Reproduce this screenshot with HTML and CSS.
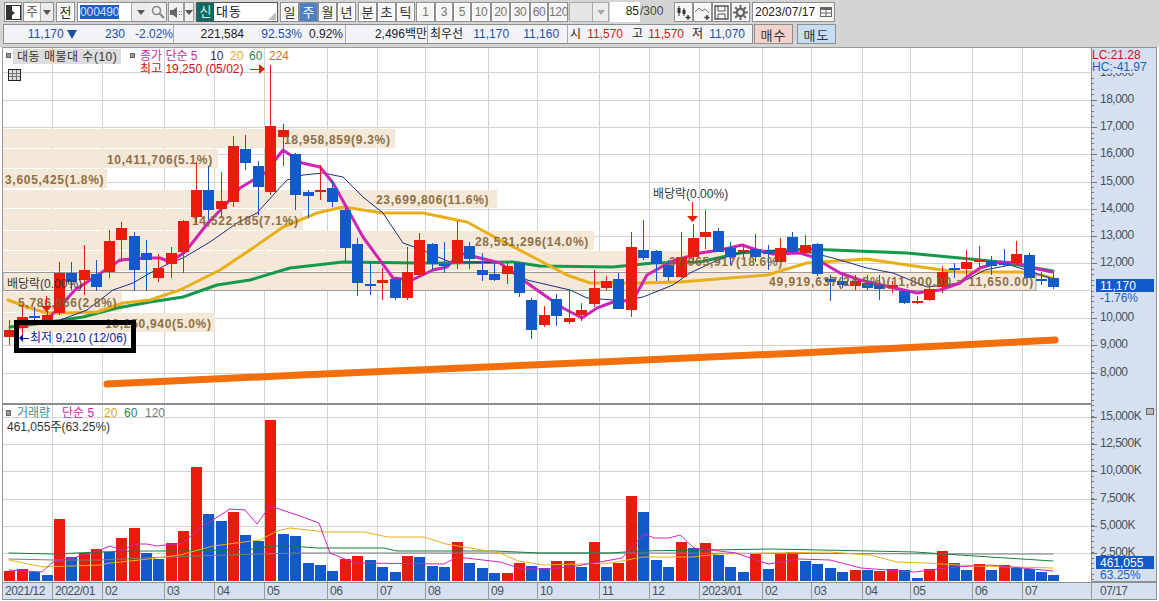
FILE: index.html
```html
<!doctype html>
<html>
<head>
    <meta charset='utf-8'>
    <title>대동 주봉 차트</title>
    <link rel="stylesheet" href="styles.css">
</head>
<body>
    <div class="toolbar">
        <button class="btn iconBtn w18">
            <svg width="15" height="15" viewBox="0 0 15 15"><rect x="0.5" y="0.5" width="14" height="14" fill="#fff" stroke="#333"/><rect x="1" y="1" width="5" height="13" fill="#333"/><path d="M5 5l4 3-4 3z" fill="#333"/></svg>
        </button>
        <div class="combo w30"><span class="comboText">주</span><span class="arrowBtn"><i class="tri"></i></span></div>
        <button class="btn w19 gapL">전</button>
        <div class="codeBox">
            <span class="codeField"><span class="selected">000490</span></span>
            <span class="arrowBtn w19"><i class="tri"></i></span>
            <span class="plainBtn w16">
                <svg width="14" height="14" viewBox="0 0 14 14"><circle cx="5.5" cy="5.5" r="4" fill="none" stroke="#888" stroke-width="1.6"/><path d="M8.5 8.5l4.5 4.5" stroke="#888" stroke-width="2.2"/></svg>
            </span>
        </div>
        <span class="plainBtn w16 soundBtn">
            <svg width="13" height="13" viewBox="0 0 13 13"><path d="M0 4h3l4-3v11l-4-3H0z" fill="#666"/><path d="M9 5h1v1H9zM11 5h1v1h-1zM9 8h1v1H9zM11 8h1v1h-1z" fill="#888"/></svg>
        </span>
        <span class="arrowBtn w9"><i class="tri"></i></span>
        <div class="nameBox"><span class="newBadge">신</span><span class="nameText">대동</span><i class="grip"></i></div>
        <div class="group gapL2">
            <button class="btn w19">일</button><button class="btn w19 active">주</button><button class="btn w19">월</button><button class="btn w19">년</button>
        </div>
        <div class="group gapL2">
            <button class="btn w19">분</button><button class="btn w19">초</button><button class="btn w19">틱</button>
        </div>
        <div class="group gapL3 nums">
            <button class="btn w19">1</button><button class="btn w18">3</button><button class="btn w18">5</button><button class="btn w20">10</button><button class="btn w19">20</button><button class="btn w20">30</button><button class="btn w18">60</button><button class="btn w20">120</button>
        </div>
        <div class="emptyCombo"><span class="arrowBtn"><i class="tri light"></i></span></div>
        <span class="countField">85</span><span class="countMax">/300</span>
        <button class="btn w19 gapL9 iconBtn">
            <svg width="15" height="15" viewBox="0 0 15 15"><path d="M3 1v10M8 3v8" stroke="#333"/><rect x="1.5" y="3" width="3" height="5" fill="#333"/><rect x="6.5" y="5" width="3" height="4" fill="#333"/><path d="M12 10v5M9.5 12.5h5" stroke="#333" stroke-width="1.4"/></svg>
        </button>
        <button class="btn w19 iconBtn">
            <svg width="15" height="15" viewBox="0 0 15 15"><path d="M0 7l4-4 3 3 3-2 4 4" fill="none" stroke="#777"/><path d="M12 10v5M9.5 12.5h5" stroke="#333" stroke-width="1.4"/></svg>
        </button>
        <button class="btn w19 iconBtn">
            <svg width="15" height="15" viewBox="0 0 15 15"><path d="M1 1h13v13H1z" fill="none" stroke="#555" stroke-width="1.4"/><path d="M4 1v5h7V1M4 14V9h7v5" fill="none" stroke="#555"/></svg>
        </button>
        <button class="btn w19 iconBtn">
            <svg width="15" height="15" viewBox="0 0 15 15"><circle cx="7.5" cy="7.5" r="3.6" fill="none" stroke="#666" stroke-width="2.4"/><path d="M7.5 0v3M7.5 12v3M0 7.5h3M12 7.5h3M2.2 2.2l2 2M10.8 10.8l2 2M12.8 2.2l-2 2M4.2 10.8l-2 2" stroke="#666" stroke-width="2"/></svg>
        </button>
        <div class="dateBox">
            <span class="dateText">2023/07/17</span>
            <span class="calBtn">
                <svg width="12" height="10" viewBox="0 0 12 10"><rect width="12" height="10" fill="#666"/><rect x="1" y="3" width="4.5" height="2.5" fill="#fff"/><rect x="6.5" y="3" width="4.5" height="2.5" fill="#fff"/><rect x="1" y="6.5" width="4.5" height="2.5" fill="#fff"/><rect x="6.5" y="6.5" width="4.5" height="2.5" fill="#fff"/></svg>
            </span>
        </div>
    </div>

    <div class="quotebar">
        <div class="quoteBox">
            <div class="cell cellPrice">
                <span class="down w49 right">11,170 <i class="downTri"></i></span>
                <span class="down w48 right">230</span>
                <span class="down w48 right">-2.02%</span>
            </div>
            <div class="cell cellVol">
                <span class="dark w70 right">221,584</span>
                <span class="down w58 right">92.53%</span>
                <span class="dark w41 right">0.92%</span>
            </div>
            <div class="cell cellAmt"><span class="dark w81 right">2,496백만</span></div>
            <div class="cell cellBest">
                <span class="dark">최우선</span>
                <span class="down w46 right">11,170</span>
                <span class="down w50 right">11,160</span>
            </div>
            <div class="cell cellOhl">
                <span class="dark">시</span><span class="up w42 right">11,570</span>
                <span class="dark w20 right">고</span><span class="up w41 right">11,570</span>
                <span class="dark w19 right">저</span><span class="down w42 right">11,070</span>
            </div>
        </div>
        <button class="orderBtn buy">매수</button>
        <button class="orderBtn sell">매도</button>
    </div>

    <svg id="chart" class="chart" width="1159" height="554" viewBox="0 47 1159 554"></svg>
    <script src="chart.js"></script>
</body>
</html>
```

FILE: styles.css
```css
html, body {
    margin: 0;
    padding: 0;
    overflow: hidden;
}

body {
    width: 1159px;
    height: 601px;
    background: #d4d4d4;
    font-family: "Liberation Sans", "Noto Sans CJK KR", sans-serif;
    font-size: 12px;
    color: #222;
}

.toolbar {
    display: flex;
    align-items: stretch;
    height: 20px;
    padding: 2px 0 0 4px;
}

.btn {
    box-sizing: border-box;
    height: 20px;
    padding: 0;
    margin: 0;
    border: 1px solid #8e8e8e;
    background: #f5f5f5;
    font: inherit;
    font-size: 13px;
    line-height: 17px;
    color: #333;
    box-shadow: inset 0 0 0 1px #fff;
    flex: none;
}

.iconBtn {
    display: flex;
    align-items: center;
    justify-content: center;
}

.btn.active {
    background: #4f80c4;
    color: #fff;
    box-shadow: none;
}

.w9 { width: 9px; }
.w16 { width: 16px; }
.w18 { width: 18px; }
.w19 { width: 19px; }
.w20 { width: 20px; }
.w30 { width: 31px; }

.gapL { margin-left: 2px; }
.gapL2 { margin-left: 2px; }
.gapL3 { margin-left: 1px; }
.gapL9 { margin-left: 9px; }

.group {
    display: flex;
    flex: none;
}

.nums .btn {
    color: #777;
    font-size: 12px;
    letter-spacing: -0.3px;
}

.combo {
    display: flex;
    box-sizing: border-box;
    height: 20px;
    margin-left: 1px;
    border: 1px solid #8e8e8e;
    background: #fff;
    flex: none;
}

.comboText {
    flex: 1;
    text-align: center;
    font-size: 13px;
    line-height: 18px;
    color: #555;
}

.arrowBtn {
    display: flex;
    align-items: center;
    justify-content: center;
    width: 13px;
    background: #ececec;
    border-left: 1px solid #aaa;
    box-sizing: border-box;
    flex: none;
}

.arrowBtn.w19 { width: 19px; }
.arrowBtn.w9 { width: 10px; border: 1px solid #999; background: #f2f2f2; }

.tri {
    width: 0;
    height: 0;
    border-left: 4px solid transparent;
    border-right: 4px solid transparent;
    border-top: 5px solid #555;
}

.tri.light { border-top-color: #aaa; }

.codeBox {
    display: flex;
    box-sizing: border-box;
    width: 90px;
    height: 20px;
    margin-left: 2px;
    border: 1px solid #8e8e8e;
    background: #f0f0f0;
    flex: none;
}

.codeField {
    flex: 1;
    background: #fff;
    padding-left: 2px;
    line-height: 18px;
}

.selected {
    display: inline-block;
    height: 14px;
    line-height: 14px;
    background: #1f5fc4;
    color: #cfe0ff;
    letter-spacing: -0.1px;
}

.plainBtn {
    display: flex;
    align-items: center;
    justify-content: center;
    flex: none;
}

.soundBtn {
    box-sizing: border-box;
    height: 20px;
    border: 1px solid #999;
    background: #f2f2f2;
    margin-left: 1px;
}

.nameBox {
    position: relative;
    display: flex;
    box-sizing: border-box;
    width: 82px;
    height: 20px;
    margin-left: 2px;
    border: 1px solid #555;
    background: #fff;
    flex: none;
}

.newBadge {
    width: 17px;
    background: #0c6a60;
    color: #d8f0ea;
    font-size: 13px;
    line-height: 17px;
    text-align: center;
}

.nameText {
    padding-left: 2px;
    font-size: 13px;
    line-height: 18px;
    letter-spacing: 1px;
    color: #111;
}

.grip {
    position: absolute;
    right: 1px;
    bottom: 1px;
    width: 0;
    height: 0;
    border-left: 8px solid transparent;
    border-bottom: 8px solid #bbb;
}

.emptyCombo {
    display: flex;
    justify-content: flex-end;
    box-sizing: border-box;
    width: 40px;
    height: 20px;
    margin-left: 1px;
    border: 1px solid #aaa;
    background: #e6e6e6;
    flex: none;
}

.emptyCombo .arrowBtn { width: 16px; }

.countField {
    box-sizing: border-box;
    width: 30px;
    height: 20px;
    margin-left: 1px;
    background: #fff;
    text-align: right;
    line-height: 19px;
    padding-right: 1px;
    flex: none;
}

.countMax {
    width: 25px;
    line-height: 19px;
    color: #444;
    flex: none;
}

.dateBox {
    display: flex;
    box-sizing: border-box;
    width: 83px;
    height: 20px;
    margin-left: 2px;
    border: 1px solid #8e8e8e;
    background: #fff;
    flex: none;
}

.dateText {
    width: 64px;
    line-height: 18px;
    padding-left: 2px;
    box-sizing: border-box;
    white-space: nowrap;
}

.calBtn {
    flex: 1;
    display: flex;
    align-items: center;
    justify-content: center;
    background: #f6f4ee;
}

.quotebar {
    display: flex;
    height: 20px;
    padding: 2px 0 0 3px;
}

.quoteBox {
    display: flex;
    box-sizing: border-box;
    width: 750px;
    height: 20px;
    border: 1px solid #8e8e8e;
    background: #f1f3f7;
    flex: none;
}

.cell {
    display: flex;
    box-sizing: border-box;
    line-height: 18px;
    white-space: nowrap;
    border-right: 1px solid #aaa;
}

.cellPrice { width: 170px; }
.cellVol { width: 172px; }
.cellAmt { width: 82px; }
.cellBest { width: 140px; padding-left: 2px; }
.cellOhl { border: 0; padding-left: 2px; }

.right { text-align: right; }
.w41 { width: 41px; }
.w42 { width: 42px; }
.w46 { width: 46px; }
.w48 { width: 48px; }
.w49 { width: 73px; }
.w50 { width: 50px; }
.w58 { width: 58px; }
.w70 { width: 70px; }
.w81 { width: 81px; }

.down { color: #1d4fa8; }
.up { color: #c8261c; }
.dark { color: #222; }

.downTri {
    display: inline-block;
    width: 0;
    height: 0;
    border-left: 5px solid transparent;
    border-right: 5px solid transparent;
    border-top: 9px solid #1d4fa8;
    vertical-align: -1px;
}

.orderBtn {
    box-sizing: border-box;
    width: 39px;
    height: 20px;
    padding: 0;
    border: 1px solid #8e8e8e;
    font: inherit;
    font-size: 13px;
    letter-spacing: 1px;
    color: #333;
    flex: none;
}

.buy { margin-left: 1px; background: #f2d2cb; }
.sell { margin-left: 4px; background: #c8def4; }

.chart {
    display: block;
    margin-top: 3px;
}

.chart text {
    font-family: "Liberation Sans", "Noto Sans CJK KR", sans-serif;
    font-size: 12px;
}

.bgPanel { fill: #fff; }
.edge { stroke: #999; stroke-width: 1; fill: none; }
.edgeDark { stroke: #8a8a8a; stroke-width: 2; fill: none; }
.axis { fill: #d6e0ee; stroke: #8f8f8f; }
.axisCap { fill: #d6e0ee; }
.grid { stroke: #d2d2d2; stroke-width: 1; }
.tick { stroke: #777; stroke-width: 1; }
.band { fill: #f6e8d9; }
.bandMax { fill: #f6e8d9; stroke: #999; }
.bandText { fill: #7d6030; font-weight: bold; letter-spacing: 0.7px; opacity: 0.88; }
.bandWide { letter-spacing: 0.9px; }
.closeLine { stroke: #999; stroke-width: 1; }

.line { fill: none; stroke-linejoin: round; stroke-linecap: round; }
.ma5 { stroke: #cf25b4; stroke-width: 3; }
.ma10 { stroke: #1c2f80; stroke-width: 1; }
.ma20 { stroke: #e9af1b; stroke-width: 3; }
.ma60 { stroke: #14994c; stroke-width: 3; }
.vma5 { stroke: #cf25b4; stroke-width: 1; }
.vma20 { stroke: #e9af1b; stroke-width: 1; }
.vma60 { stroke: #14803f; stroke-width: 1; }
.vma120 { stroke: #7d7d7d; stroke-width: 1; }
.trend { fill: none; stroke: #f26f0c; stroke-width: 7; stroke-linecap: round; stroke-linejoin: round; }

.red { fill: #e81b0c; }
.blue { fill: #1259c9; }
.wickRed { stroke: #e81b0c; stroke-width: 1; }
.wickBlue { stroke: #1259c9; stroke-width: 1; }
.arrowRed { fill: #e81b0c; }
.arrowHead { fill: #12129c; }
.markLine { stroke: #e81b0c; stroke-width: 1; }
.arrowNavy { stroke: #12129c; stroke-width: 1; }

.callout { fill: none; stroke: #000; stroke-width: 5; }

.legendBox { fill: #ddd; }
.legendDot { fill: #999; stroke: #666; }
.tableIcon { fill: #ddd; stroke: #222; }
.cornerIcon { fill: #bbb; stroke: #666; }

.tText { fill: #333; }
.tWide { letter-spacing: 0.5px; }
.tAxis { fill: #46505e; letter-spacing: -0.5px; }
.tMagenta { fill: #c229a8; }
.tNavy { fill: #1c2f80; }
.tGold { fill: #e2a51d; }
.tGreen { fill: #1f8a49; }
.tOrange { fill: #e2701d; }
.tRed { fill: #c9151c; }
.tBlue { fill: #1d5fbf; }
.tTeal { fill: #3a8f96; }
.tGray { fill: #777; }
.tHigh { fill: #c41423; }
.tLow { fill: #12129c; }
.tWhite { fill: #fff; }
```

FILE: chart.js
```js
// weekly candles as pixel rows: high, body top, body bottom, low, colour
var candles = [
    [320,330,337,345,"r"],[305,317,328,335,"r"],[307,316,318,322,"b"],[311,315,322,325,"r"],
    [262,273,313,315,"r"],[262,273,282,290,"b"],[245,270,280,295,"r"],[260,274,287,291,"b"],
    [230,241,272,278,"r"],[222,228,240,262,"r"],[232,236,270,291,"b"],[240,253,260,291,"b"],
    [254,268,278,282,"r"],[247,253,264,278,"r"],[220,221,252,273,"r"],[162,190,217,223,"r"],
    [166,190,210,220,"b"],[172,201,209,218,"r"],[136,146,202,207,"r"],[135,149,163,170,"b"],
    [161,166,187,215,"b"],[65,126,192,195,"r"],[124,130,137,166,"r"],[153,154,195,210,"b"],
    [190,192,196,218,"b"],[165,190,191,200,"r"],[180,188,202,207,"b"],[208,210,248,262,"b"],
    [238,244,283,296,"b"],[262,284,285,295,"b"],[268,280,283,300,"r"],[278,279,298,300,"b"],
    [247,272,298,300,"r"],[233,240,275,277,"r"],[243,244,264,270,"b"],[242,264,266,273,"b"],
    [221,240,263,269,"r"],[242,246,259,269,"b"],[253,270,275,281,"b"],[262,274,280,281,"b"],
    [262,266,274,284,"r"],[262,263,293,297,"b"],[298,300,330,339,"b"],[306,315,325,327,"r"],
    [294,299,316,326,"b"],[290,318,322,324,"r"],[303,310,315,321,"r"],[270,288,304,307,"r"],
    [276,281,288,290,"r"],[273,279,309,309,"b"],[232,247,310,317,"r"],[220,250,258,260,"b"],
    [250,251,264,281,"b"],[260,265,277,281,"b"],[232,257,277,278,"r"],[224,238,257,260,"r"],
    [210,232,237,249,"r"],[228,231,252,252,"b"],[242,248,257,265,"b"],[244,250,252,257,"r"],
    [234,249,257,262,"b"],[245,252,254,270,"b"],[238,248,262,262,"r"],[232,237,252,254,"b"],
    [235,245,253,255,"r"],[243,244,274,276,"b"],[275,279,282,301,"b"],[275,281,285,288,"b"],
    [275,281,286,290,"r"],[275,283,288,290,"b"],[275,285,289,300,"b"],[281,285,287,293,"r"],
    [291,291,303,304,"b"],[296,301,303,304,"r"],[286,289,300,301,"r"],[266,272,287,293,"r"],
    [263,268,270,278,"b"],[250,262,269,276,"r"],[246,260,262,267,"r"],[256,261,266,275,"b"],
    [249,263,265,267,"b"],[241,254,263,265,"r"],[253,255,278,278,"b"],[272,279,281,285,"b"],
    [272,278,287,289,"b"]
];

// top of each volume bar, same order as the candles
var volumes = [
    [571,"r"],[569,"r"],[572,"b"],[575,"b"],[519,"r"],[557,"b"],[553,"r"],[549,"r"],[552,"b"],[538,"r"],
    [528,"r"],[553,"b"],[559,"b"],[543,"r"],[531,"r"],[467,"r"],[514,"b"],[521,"b"],[512,"r"],[535,"b"],
    [541,"b"],[420,"r"],[534,"b"],[536,"b"],[563,"b"],[565,"b"],[571,"b"],[559,"r"],[556,"r"],[560,"b"],
    [567,"b"],[572,"b"],[556,"r"],[557,"b"],[566,"b"],[567,"b"],[542,"r"],[563,"b"],[568,"b"],[573,"b"],
    [573,"r"],[563,"r"],[566,"b"],[568,"b"],[561,"r"],[561,"r"],[567,"b"],[542,"r"],[567,"b"],[563,"r"],
    [496,"r"],[512,"b"],[560,"b"],[567,"b"],[542,"r"],[548,"b"],[543,"r"],[555,"b"],[567,"b"],[572,"b"],
    [554,"r"],[569,"b"],[554,"r"],[552,"r"],[561,"b"],[564,"b"],[568,"b"],[572,"b"],[570,"r"],[570,"b"],
    [571,"r"],[569,"r"],[570,"b"],[578,"b"],[569,"r"],[551,"r"],[563,"b"],[570,"b"],[564,"r"],[570,"b"],
    [565,"r"],[568,"b"],[569,"b"],[572,"b"],[575,"b"]
];

var ma5 = [[20,327],[47,320],[63,303],[75,290],[110,267],[120,260],[145,258],[160,258],[170,262],[185,252],[208,223],[227,203],[240,188],[250,182],[265,173],[283,150],[302,163],[320,167],[333,183],[363,237],[393,278],[412,280],[433,270],[447,267],[460,253],[480,258],[500,263],[523,280],[547,297],[563,308],[582,318],[597,308],[613,302],[633,300],[647,275],[670,262],[700,253],[720,250],[742,245],[757,250],[773,254],[800,253],[813,257],[840,273],[860,280],[890,287],[917,293],[940,290],[960,283],[967,277],[980,268],[1000,262],[1017,263],[1033,268],[1052,272]];
var ma10 = [[55,322],[87,310],[113,290],[133,283],[150,273],[170,263],[183,258],[210,242],[237,223],[257,213],[275,193],[287,180],[303,175],[323,173],[343,177],[363,197],[383,213],[403,243],[417,248],[450,262],[470,262],[500,263],[527,280],[570,290],[587,298],[613,300],[627,300],[643,297],[673,285],[690,273],[707,265],[730,255],[757,250],[813,253],[833,258],[867,268],[893,273],[927,287],[960,283],[985,270],[1010,265],[1050,278]];
var ma20 = [[8,300],[30,308],[47,313],[67,313],[97,312],[123,303],[150,300],[180,290],[220,270],[250,250],[283,227],[317,213],[343,207],[383,213],[423,213],[467,222],[500,240],[533,257],[567,275],[590,283],[640,283],[680,282],[767,275],[807,263],[867,259],[907,265],[957,272],[1020,272],[1040,275],[1053,278]];
var ma60 = [[10,327],[43,323],[83,317],[117,308],[150,302],[183,297],[217,285],[250,280],[290,268],[343,262],[417,263],[443,263],[513,262],[540,266],[613,267],[653,263],[700,262],[740,253],[807,249],[907,253],[960,258],[1000,262],[1053,271]];
var trend = [[107,384],[300,375],[600,362],[800,353],[960,345],[1055,340]];

var vma5 = [[9,570],[42,572],[53,562],[77,557],[100,550],[110,546],[123,551],[133,544],[147,544],[157,546],[183,543],[200,528],[230,509],[245,510],[257,524],[270,506],[300,516],[319,523],[330,553],[355,563],[444,564],[457,557],[500,562],[522,569],[549,569],[576,566],[611,560],[622,558],[644,534],[654,538],[669,538],[680,535],[694,548],[736,553],[750,558],[768,564],[799,559],[830,560],[861,568],[915,572],[955,567],[990,565],[1053,571]];
var vma20 = [[9,560],[43,567],[100,565],[110,563],[140,560],[180,555],[213,546],[260,540],[277,531],[290,528],[326,532],[364,532],[388,537],[424,537],[446,544],[482,550],[500,553],[518,561],[544,565],[611,563],[643,557],[692,557],[719,554],[830,552],[870,555],[897,562],[924,563],[977,566],[1053,568]];
var vma60 = [[9,553],[53,554],[100,552],[133,551],[187,551],[257,549],[270,546],[290,546],[317,548],[384,548],[397,551],[495,551],[540,553],[611,553],[638,551],[772,549],[870,551],[915,552],[960,555],[990,557],[1053,561]];
var vma120 = [[9,559],[53,560],[100,560],[167,557],[257,554],[300,553],[640,553],[990,554],[1053,554]];

var gridX = [52,102,164,214,264,327,377,425,488,537,599,649,699,762,811,862,910,972,1022];
var gridY = [72,100,127,154,182,209,236,263,290,318,345,373];
var gridVolY = [417,444,471,499,526,553];

// 매물대 rows: top, height, right end, label, label x
var bands = [
    [129,19,395,"18,958,859(9.3%)",284],
    [149,19,218,"10,411,706(5.1%)",107],
    [169,19,107,"3,605,425(1.8%)",5],
    [190,18,497,"23,699,806(11.6%)",376],
    [209,21,303,"14,522,185(7.1%)",192],
    [231,19,594,"28,531,296(14.0%)",475],
    [251,20,787,"37,965,917(18.6%)",669],
    [292,20,122,"5,786,066(2.8%)",18],
    [313,19,215,"10,250,940(5.0%)",105]
];

var svg = document.getElementById("chart");

function add(tag, attrs, text) {
    var el = document.createElementNS("http://www.w3.org/2000/svg", tag);
    for (var k in attrs) {
        el.setAttribute(k, attrs[k]);
    }
    if (text) {
        el.textContent = text;
    }
    svg.appendChild(el);
    return el;
}

function hline(y, x1, x2, cls) {
    add("line", {x1: x1, x2: x2, y1: y + 0.5, y2: y + 0.5, "class": cls});
}

function vline(x, y1, y2, cls) {
    add("line", {x1: x + 0.5, x2: x + 0.5, y1: y1, y2: y2, "class": cls});
}

function poly(points, cls) {
    add("polyline", {points: points.join(" "), "class": cls});
}

function label(x, y, cls, text) {
    add("text", {x: x, y: y, "class": cls}, text);
}

function candleX(i) {
    return 9.3 + i * 12.43;
}

// panels
add("rect", {x: 0, y: 47, width: 1159, height: 554, "class": "bgPanel"});

for (var i = 0; i < gridX.length; i++) {
    vline(gridX[i], 48, 402, "grid");
    vline(gridX[i], 405, 582, "grid");
}
for (i = 0; i < gridY.length; i++) {
    hline(gridY[i], 3, 1091, "grid");
}
for (i = 0; i < gridVolY.length; i++) {
    hline(gridVolY[i], 3, 1091, "grid");
}

// volume profile
for (i = 0; i < bands.length; i++) {
    add("rect", {x: 3, y: bands[i][0], width: bands[i][2] - 3, height: bands[i][1], "class": "band"});
}
add("rect", {x: 3, y: 272.5, width: 1033, height: 18, "class": "bandMax"});

// moving averages, then candles on top
poly(ma60, "line ma60");
poly(ma20, "line ma20");
poly(ma10, "line ma10");
poly(ma5, "line ma5");
poly(trend, "trend");

for (i = 0; i < candles.length; i++) {
    var c = candles[i];
    var x = Math.round(candleX(i));
    var isRed = c[4] == "r";
    vline(x, c[0], c[3], isRed ? "wickRed" : "wickBlue");
    add("rect", {x: x - 5, y: c[1], width: 11, height: Math.max(c[2] - c[1], 2), "class": isRed ? "red" : "blue"});
}

// volume bars and their averages
for (i = 0; i < volumes.length; i++) {
    add("rect", {x: Math.round(candleX(i)) - 5, y: volumes[i][0], width: 11, height: 581 - volumes[i][0], "class": volumes[i][1] == "r" ? "red" : "blue"});
}
poly(vma120, "line vma120");
poly(vma60, "line vma60");
poly(vma20, "line vma20");
poly(vma5, "line vma5");

// labels sit over the candles
for (i = 0; i < bands.length; i++) {
    label(bands[i][4], bands[i][0] + bands[i][1] / 2 + 5, "bandText", bands[i][3]);
}
label(769, 286, "bandText bandWide", "49,919,637(24.5%)(11,800.00 ~ 11,650.00)");
label(7, 288, "tText", "배당락(0.00%)");
label(653, 198, "tText", "배당락(0.00%)");

// ex-dividend arrows
vline(46, 296, 306, "markLine");
add("path", {d: "M41 306h11l-5.5 6z", "class": "arrowRed"});
vline(692, 202, 217, "markLine");
add("path", {d: "M687 216h11l-5.5 6z", "class": "arrowRed"});

// high, low marks
hline(69, 250, 260, "markLine");
add("path", {d: "M259 64l6 5-6 5z", "class": "arrowRed"});
label(140, 73, "tHigh", "최고 19,250 (05/02)");
add("rect", {x: 16.5, y: 322.5, width: 117, height: 28, "class": "callout"});
hline(338, 20, 29, "arrowNavy");
add("path", {d: "M23 334v8l-4-4z", "class": "arrowHead"});
label(30, 342, "tLow", "최저 9,210 (12/06)");

// legends
add("rect", {x: 6.5, y: 53.5, width: 4, height: 4, "class": "legendDot"});
add("rect", {x: 13, y: 49, width: 108, height: 15, "class": "legendBox"});
label(17, 61, "tText tWide", "대동 매물대 수(10)");
add("rect", {x: 130.5, y: 53.5, width: 4, height: 4, "class": "legendDot"});
label(140, 60, "tMagenta", "종가 단순 5");
label(210, 60, "tNavy", "10");
label(230, 60, "tGold", "20");
label(249, 60, "tGreen", "60");
label(269, 60, "tOrange", "224");
add("rect", {x: 8.5, y: 69.5, width: 12, height: 11, "class": "tableIcon"});
hline(73, 9, 20, "tick");
hline(76, 9, 20, "tick");
vline(12, 70, 80, "tick");
vline(16, 70, 80, "tick");

add("rect", {x: 6.5, y: 410.5, width: 4, height: 5, "class": "legendDot"});
label(17, 417, "tTeal", "거래량");
label(62, 417, "tMagenta", "단순 5");
label(104, 417, "tGold", "20");
label(124, 417, "tGreen", "60");
label(145, 417, "tGray", "120");
label(7, 431, "tText", "461,055주(63.25%)");

// frame
vline(2, 47, 582, "edge");
hline(47, 2, 1157, "edge");
add("line", {x1: 2, x2: 1091, y1: 404, y2: 404, "class": "edgeDark"});

// price axis
add("rect", {x: 1091.5, y: 47.5, width: 65, height: 534, "class": "axis"});
for (var y = 78; y < 582; y += 5.45) {
    hline(Math.round(y), 1091, 1094, "tick");
}
var prices = [[18000,100],[17000,127],[16000,154],[15000,182],[14000,209],[13000,236],[12000,263],[10000,318],[9000,345],[8000,373]];
for (i = 0; i < prices.length; i++) {
    hline(prices[i][1], 1091, 1097, "tick");
    label(1100, prices[i][1] + 3, "tAxis", prices[i][0].toLocaleString("en-US"));
}
// the top price is mostly hidden behind the LC/HC readout
label(1100, 76, "tAxis", "19,000");
add("rect", {x: 1092, y: 48, width: 64, height: 25, "class": "axisCap"});
label(1092, 59, "tRed", "LC:21.28");
label(1092, 71, "tBlue", "HC:-41.97");
add("rect", {x: 1096, y: 279, width: 58, height: 13, "class": "blue"});
label(1100, 290, "tWhite", "11,170");
label(1100, 302, "tBlue", "-1.76%");

var vols = [["15,000K",417],["12,500K",444],["10,000K",471],["7,500K",499],["5,000K",526],["2,500K",553]];
for (i = 0; i < vols.length; i++) {
    hline(vols[i][1], 1091, 1097, "tick");
    label(1100, vols[i][1] + 3, "tAxis", vols[i][0]);
}
add("rect", {x: 1096, y: 556, width: 58, height: 13, "class": "blue"});
label(1100, 567, "tWhite", "461,055");
label(1100, 579, "tBlue", "63.25%");
add("rect", {x: 1146.5, y: 408.5, width: 7, height: 6, "class": "cornerIcon"});

// time axis
add("rect", {x: 2.5, y: 582.5, width: 1154, height: 17, "class": "axis"});
vline(1091, 582, 600, "edge");
var months = ["2021/12","2022/01","02","03","04","05","06","07","08","09","10","11","12","2023/01","02","03","04","05","06","07"];
var monthX = [2,52,102,164,214,264,327,377,425,488,537,599,649,699,762,811,862,910,972,1022];
for (i = 0; i < months.length; i++) {
    vline(monthX[i], 582, 600, "edge");
    label(monthX[i] + 3, 595, "tAxis", months[i]);
}
label(1100, 595, "tAxis", "07/17");
```
